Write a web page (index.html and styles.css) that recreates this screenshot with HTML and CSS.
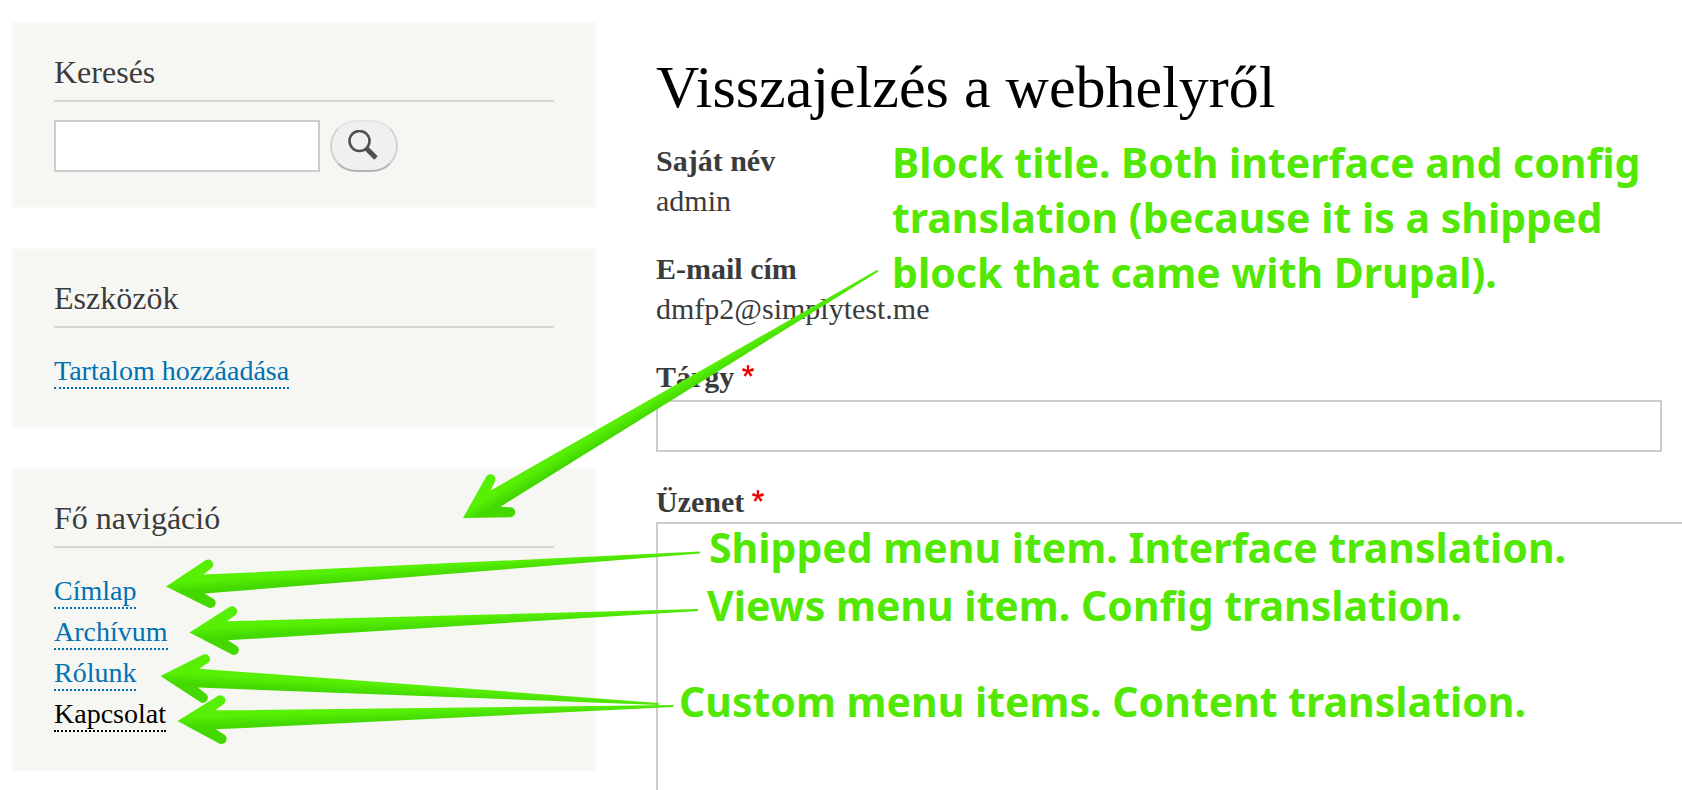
FILE: index.html
```html
<!DOCTYPE html>
<html lang="hu">
<head>
<meta charset="UTF-8" />
<title>Visszajelzés a webhelyről</title>
<link rel="stylesheet" href="styles.css">
</head>
<body>
<div class="page">
  <!-- Sidebar blocks -->
  <aside class="sidebar">
    <section class="block">
      <h2><label for="search">Keresés</label></h2>
      <form class="search-form">
        <input type="search" id="search" class="search-input" />
        <button type="button" class="search-button" aria-label="Keresés">
          <svg width="32" height="32" viewBox="0 0 32 32" fill="none" stroke="#505050">
            <ellipse cx="11.5" cy="11" rx="10" ry="10" stroke-width="2.6" />
            <path d="M18.5 18.5L28 28" stroke-width="5" />
          </svg>
        </button>
      </form>
    </section>

    <section class="block">
      <h2>Eszközök</h2>
      <ul class="menu">
        <li><a href="#">Tartalom hozzáadása</a></li>
      </ul>
    </section>

    <nav class="block">
      <h2>Fő navigáció</h2>
      <ul class="menu">
        <li><a href="#">Címlap</a></li>
        <li><a href="#">Archívum</a></li>
        <li><a href="#">Rólunk</a></li>
        <li><a href="#" class="active">Kapcsolat</a></li>
      </ul>
    </nav>
  </aside>

  <!-- Contact form -->
  <main class="content">
    <h1>Visszajelzés a webhelyről</h1>
    <form>
      <div class="form-item">
        <div class="form-label">Saját név</div>
        <div>admin</div>
      </div>
      <div class="form-item">
        <div class="form-label">E-mail cím</div>
        <div>dmfp2@simplytest.me</div>
      </div>
      <div class="form-item">
        <label class="form-label" for="subject">Tárgy
          <svg class="required" viewBox="0 0 16 16"><path d="M0 7.562l1.114-3.438c2.565.906 4.43 1.688 5.59 2.35C6.398 3.553 6.237 1.544 6.22.447h3.511c-.05 1.597-.234 3.6-.558 6.003 1.664-.838 3.566-1.613 5.714-2.325L16 7.562c-2.05.678-4.06 1.131-6.028 1.356.984.856 2.372 2.381 4.166 4.575l-2.906 2.059c-.935-1.274-2.041-3.009-3.316-5.206-1.194 2.275-2.244 4.013-3.147 5.206l-2.856-2.059c1.872-2.307 3.211-3.832 4.017-4.575C3.849 8.516 1.872 8.062 0 7.562z" /></svg>
        </label>
        <input type="text" id="subject" class="form-text" />
      </div>
      <div class="form-item">
        <label class="form-label" for="message">Üzenet
          <svg class="required" viewBox="0 0 16 16"><path d="M0 7.562l1.114-3.438c2.565.906 4.43 1.688 5.59 2.35C6.398 3.553 6.237 1.544 6.22.447h3.511c-.05 1.597-.234 3.6-.558 6.003 1.664-.838 3.566-1.613 5.714-2.325L16 7.562c-2.05.678-4.06 1.131-6.028 1.356.984.856 2.372 2.381 4.166 4.575l-2.906 2.059c-.935-1.274-2.041-3.009-3.316-5.206-1.194 2.275-2.244 4.013-3.147 5.206l-2.856-2.059c1.872-2.307 3.211-3.832 4.017-4.575C3.849 8.516 1.872 8.062 0 7.562z" /></svg>
        </label>
        <textarea id="message" class="form-textarea" rows="12"></textarea>
      </div>
    </form>
  </main>

  <!-- Annotations over the page -->
  <svg class="arrows" width="1682" height="790" viewBox="0 0 1682 790">
    <defs>
      <linearGradient id="green" gradientUnits="userSpaceOnUse" x1="0" y1="-10" x2="0" y2="10">
        <stop offset="0.3" stop-color="#57f005" />
        <stop offset="0.8" stop-color="#43d900" />
      </linearGradient>
    </defs>
    <g fill="url(#green)">
      <path transform="translate(463 518) rotate(-30.8)" d="M0 0L41.5-23.9A5 5 0 0 1 45.5-14.7L38-9.5L483-1V1L38 9.5L45.5 14.7A5 5 0 0 1 41.5 23.9Z" />
      <path transform="translate(166 586.5) rotate(-3.64)" d="M0 0L41.5-23.9A5 5 0 0 1 45.5-14.7L38-9.5L535-1V1L38 9.5L45.5 14.7A5 5 0 0 1 41.5 23.9Z" />
      <path transform="translate(189.5 632.5) rotate(-2.54)" d="M0 0L41.5-23.9A5 5 0 0 1 45.5-14.7L38-9.5L509-1V1L38 9.5L45.5 14.7A5 5 0 0 1 41.5 23.9Z" />
      <path transform="translate(160.5 676) rotate(3.21)" d="M0 0L41.5-23.9A5 5 0 0 1 45.5-14.7L38-9.5L499-1V1L38 9.5L45.5 14.7A5 5 0 0 1 41.5 23.9Z" />
      <path transform="translate(177.5 721) rotate(-1.73)" d="M0 0L41.5-23.9A5 5 0 0 1 45.5-14.7L38-9.5L496-1V1L38 9.5L45.5 14.7A5 5 0 0 1 41.5 23.9Z" />
    </g>
  </svg>
  <p class="note note-title">Block title. Both interface and config<br>translation (because it is a shipped<br>block that came with Drupal).</p>
  <p class="note note-shipped">Shipped menu item. Interface translation.</p>
  <p class="note note-views">Views menu item. Config translation.</p>
  <p class="note note-custom">Custom menu items. Content translation.</p>
</div>
</body>
</html>
```
FILE: styles.css
```css
* {
  box-sizing: border-box;
}
body {
  margin: 0;
  background: #fff;
  color: #3b3b3b;
  font-family: Georgia, "Liberation Serif", serif;
  font-size: 28px;
  line-height: 40px;
}
.page {
  position: relative;
  display: grid;
  grid-template-columns: 584fr 1006fr;
  gap: 60px;
  height: 100vh;
  padding: 22px 20px 0 12px;
  overflow: hidden;
}

/* Sidebar */
.sidebar {
  display: flex;
  flex-direction: column;
  gap: 40px;
}
.block {
  padding: 28px 40px 34px;
  background: #f6f6f2;
  border: 2px solid #f9f9f9;
}
.block h2 {
  margin: 0 0 18px;
  padding-bottom: 8px;
  border-bottom: 2px solid #d6d6d6;
  font-size: 32px;
  font-weight: normal;
  line-height: 40px;
  text-shadow: 0 2px 0 #fff;
}
.search-form {
  display: flex;
  gap: 10px;
}
.search-input {
  width: 266px;
  height: 52px;
  padding: 4px 8px;
  border: 2px solid #ccc;
  background: #fff;
  font: inherit;
}
.search-button {
  display: flex;
  align-items: center;
  justify-content: center;
  width: 68px;
  height: 52px;
  padding: 0;
  border: 2px solid #d2d2d2;
  border-top-color: #e4e4e4;
  border-bottom-color: #b4b4b4;
  border-radius: 26px;
  background: #f0f0f0;
}
.menu {
  margin: 0;
  padding: 5px 0 0;
  list-style: none;
}
.menu li {
  height: 41px;
}
.menu a {
  display: inline-block;
  line-height: 32px;
  border-bottom: 2px dotted #0071b3;
  color: #0071b3;
  text-decoration: none;
}
.menu a.active {
  border-color: #000;
  color: #000;
}

/* Contact form */
.content {
  font-size: 30px;
}
.content h1 {
  margin: 32px 0 21px;
  color: #000;
  font-size: 60px;
  font-weight: normal;
  line-height: 66px;
}
.form-item {
  margin-bottom: 28px;
}
.form-label {
  display: block;
  font-weight: bold;
}
.required {
  width: 12px;
  height: 12px;
  vertical-align: 10px;
  fill: #e00;
}
.form-text {
  display: block;
  width: 100%;
  height: 52px;
  margin: 3px 0 30px;
  padding: 4px 8px;
  border: 2px solid #ccc;
  font: inherit;
}
.form-textarea {
  display: block;
  box-sizing: content-box;
  width: 100%;
  padding: 8px 16px;
  border: 2px solid #ccc;
  font: inherit;
  resize: none;
}

/* Annotations */
.arrows {
  position: absolute;
  top: 0;
  left: 0;
}
.note {
  position: absolute;
  margin: 0;
  color: #53e804;
  font-family: "Noto Sans", "Open Sans", sans-serif;
  font-size: 41px;
  font-weight: bold;
  line-height: 55px;
  white-space: nowrap;
}
.note-title {
  top: 135px;
  left: 892px;
}
.note-shipped {
  top: 520px;
  left: 709px;
}
.note-views {
  top: 578px;
  left: 707px;
}
.note-custom {
  top: 674px;
  left: 679px;
}
```
